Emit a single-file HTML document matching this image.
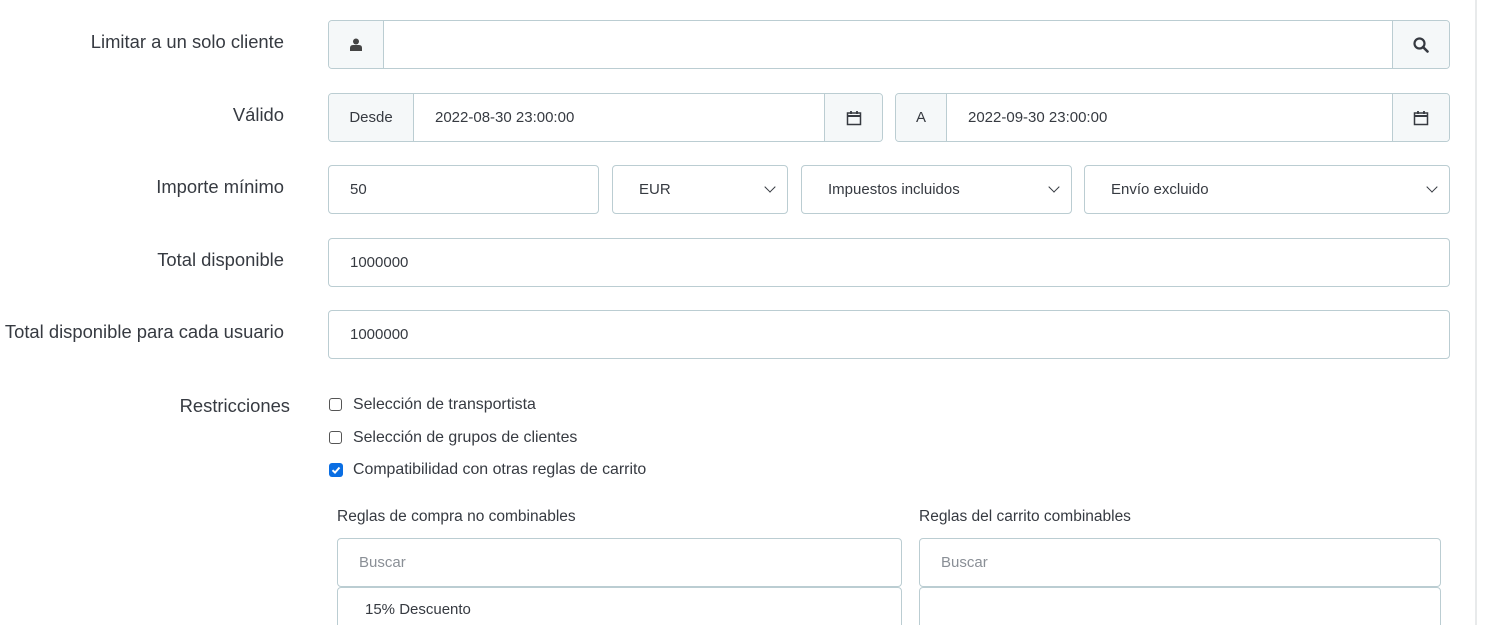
<!DOCTYPE html>
<html style="overflow:hidden"><head><meta charset="utf-8"><style>
html,body{overflow:hidden;height:625px}
body{margin:0;width:1485px;background:#fff;font-family:"Liberation Sans",sans-serif;color:#363a41;position:relative}
.a{position:absolute;box-sizing:border-box}
.lbl{position:absolute;right:1201px;font-size:18.4px;color:#363a41;white-space:nowrap}
.b{border:1px solid #bbcdd2;border-radius:4px;background:#fff}
.ad{background:#f5f8f9;display:flex;align-items:center;justify-content:center;font-size:15px}
.t{font-size:15px;display:flex;align-items:center;padding-left:21px}
.sel::after{content:"";position:absolute;right:13px;top:17px;width:7px;height:7px;border-right:1.6px solid #363a41;border-bottom:1.6px solid #363a41;transform:rotate(45deg)}
.cb{width:13px;height:13px;border:1.5px solid #555;border-radius:3px}
.ct{font-size:15.9px;left:353px}
</style></head><body>
<div class="a" style="left:1475px;top:0;width:2px;height:625px;background:#e8eaeb"></div>

<div class="lbl" style="top:31px">Limitar a un solo cliente</div>
<div class="a b" style="left:328px;top:20px;width:1122px;height:49px;overflow:hidden">
 <div class="a ad" style="left:0;top:0;width:55px;height:47px;border-right:1px solid #bbcdd2"><svg width="12" height="13" viewBox="0 0 12 13"><circle cx="6" cy="3.5" r="3" fill="#444"/><path d="M0 13V10Q0 7 3 7H9Q12 7 12 10V13Z" fill="#444"/></svg></div>
 <div class="a ad" style="right:0;top:0;width:57px;height:47px;border-left:1px solid #bbcdd2"><svg width="16" height="16" viewBox="0 0 16 16"><circle cx="6.5" cy="6.5" r="5" fill="none" stroke="#363a41" stroke-width="2.2"/><path d="M10 10L14.5 14.5" stroke="#363a41" stroke-width="2.6" stroke-linecap="round"/></svg></div>
</div>

<div class="lbl" style="top:104px">Válido</div>
<div class="a b" style="left:328px;top:93px;width:555px;height:49px;overflow:hidden">
 <div class="a ad" style="left:0;top:0;width:85px;height:47px;border-right:1px solid #bbcdd2">Desde</div>
 <div class="a t" style="left:85px;top:0;height:47px">2022-08-30 23:00:00</div>
 <div class="a ad" style="right:0;top:0;width:58px;height:47px;border-left:1px solid #bbcdd2"><svg width="16" height="16" viewBox="0 0 16 16"><rect x="1.5" y="3" width="13" height="11.5" fill="none" stroke="#363a41" stroke-width="1.5"/><path d="M1.5 6H14.5" stroke="#363a41" stroke-width="2"/><path d="M5 1V4M11 1V4" stroke="#363a41" stroke-width="1.8"/></svg></div>
</div>
<div class="a b" style="left:895px;top:93px;width:555px;height:49px;overflow:hidden">
 <div class="a ad" style="left:0;top:0;width:51px;height:47px;border-right:1px solid #bbcdd2">A</div>
 <div class="a t" style="left:51px;top:0;height:47px">2022-09-30 23:00:00</div>
 <div class="a ad" style="right:0;top:0;width:57px;height:47px;border-left:1px solid #bbcdd2"><svg width="16" height="16" viewBox="0 0 16 16"><rect x="1.5" y="3" width="13" height="11.5" fill="none" stroke="#363a41" stroke-width="1.5"/><path d="M1.5 6H14.5" stroke="#363a41" stroke-width="2"/><path d="M5 1V4M11 1V4" stroke="#363a41" stroke-width="1.8"/></svg></div>
</div>

<div class="lbl" style="top:176px">Importe mínimo</div>
<div class="a b t" style="left:328px;top:165px;width:271px;height:49px">50</div>
<div class="a b t sel" style="left:612px;top:165px;width:176px;height:49px;padding-left:26px">EUR</div>
<div class="a b t sel" style="left:801px;top:165px;width:271px;height:49px;padding-left:26px">Impuestos incluidos</div>
<div class="a b t sel" style="left:1084px;top:165px;width:366px;height:49px;padding-left:26px">Envío excluido</div>

<div class="lbl" style="top:249px">Total disponible</div>
<div class="a b t" style="left:328px;top:238px;width:1122px;height:49px">1000000</div>
<div class="lbl" style="top:321px">Total disponible para cada usuario</div>
<div class="a b t" style="left:328px;top:310px;width:1122px;height:49px">1000000</div>

<div class="lbl" style="top:395px;right:1195px">Restricciones</div>
<div class="a cb" style="left:329px;top:398px"></div><div class="a ct" style="top:396px">Selección de transportista</div>
<div class="a cb" style="left:329px;top:431px"></div><div class="a ct" style="top:429px">Selección de grupos de clientes</div>
<div class="a" style="left:329px;top:463px;width:14px;height:14px;background:#0a6ee3;border-radius:3px"><svg width="14" height="14" viewBox="0 0 14 14"><path d="M3.5 7.2L6 9.6L10.5 4.5" fill="none" stroke="#fff" stroke-width="2"/></svg></div>
<div class="a ct" style="top:461px">Compatibilidad con otras reglas de carrito</div>

<div class="a" style="left:337px;top:508px;font-size:15.5px">Reglas de compra no combinables</div>
<div class="a" style="left:919px;top:508px;font-size:15.5px">Reglas del carrito combinables</div>
<div class="a b t" style="left:337px;top:538px;width:565px;height:49px;color:#8a8f96">Buscar</div>
<div class="a b t" style="left:919px;top:538px;width:522px;height:49px;color:#8a8f96">Buscar</div>
<div class="a b" style="left:337px;top:587px;width:565px;height:60px;font-size:15px;padding:13px 0 0 27px">15% Descuento</div>
<div class="a b" style="left:919px;top:587px;width:522px;height:60px"></div>
</body></html>
